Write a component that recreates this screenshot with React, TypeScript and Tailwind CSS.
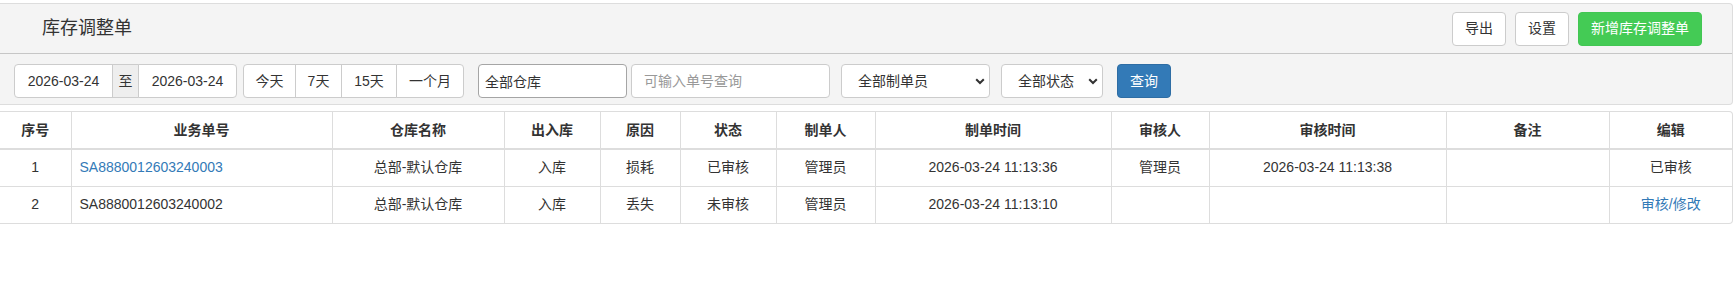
import type { FC, ReactNode } from 'react'

const font = { fontFamily: '"Liberation Sans", "Noto Sans CJK SC", sans-serif' }

const cols = [71, 261, 172, 96, 80, 96, 99, 236, 98, 237, 163, 123]
const heads = ['序号', '业务单号', '仓库名称', '出入库', '原因', '状态', '制单人', '制单时间', '审核人', '审核时间', '备注', '编辑']

type Row = {
  no: string
  warehouse: string
  dir: string
  reason: string
  status: string
  maker: string
  makeTime: string
  checker: string
  checkTime: string
  remark: string
  checked: boolean
}

const rows: Row[] = [
  {
    no: 'SA8880012603240003',
    warehouse: '总部-默认仓库',
    dir: '入库',
    reason: '损耗',
    status: '已审核',
    maker: '管理员',
    makeTime: '2026-03-24 11:13:36',
    checker: '管理员',
    checkTime: '2026-03-24 11:13:38',
    remark: '',
    checked: true,
  },
  {
    no: 'SA8880012603240002',
    warehouse: '总部-默认仓库',
    dir: '入库',
    reason: '丢失',
    status: '未审核',
    maker: '管理员',
    makeTime: '2026-03-24 11:13:10',
    checker: '',
    checkTime: '',
    remark: '',
    checked: false,
  },
]

const Btn: FC<{ children: ReactNode, green?: boolean }> = ({ children, green }) => (
  <button
    className={
      green
        ? 'h-[34px] px-[12px] rounded-[4px] border border-[#42c653] bg-[#44cb55] text-white text-[14px]'
        : 'h-[34px] px-[12px] rounded-[4px] border border-[#ccc] bg-white text-[#333] text-[14px]'
    }
  >
    {children}
  </button>
)

const Chevron = () => (
  <svg className="absolute right-[5px] top-[14px] pointer-events-none" width="10" height="7" viewBox="0 0 10 7">
    <path d="M1.2 1.2 5 5 8.8 1.2" fill="none" stroke="#333" strokeWidth="2" />
  </svg>
)

const Select: FC<{ label: string, w: string }> = ({ label, w }) => (
  <div className={`relative shrink-0 ${w} h-[34px]`}>
    <select className="appearance-none w-full h-full rounded-[4px] border border-[#ccc] bg-white pl-[16px] text-[14px] text-[#333] outline-none" style={font}>
      <option>{label}</option>
    </select>
    <Chevron />
  </div>
)

export default function App() {
  return (
    <div className="bg-white pt-[3px] text-[14px] text-[#333]" style={font}>
      <div className="w-[1733px] border border-l-0 border-[#ddd] rounded-r-[4px] bg-[#f4f4f4]">
        <div className="h-[50px] flex items-center border-b border-[#c6c6c6] pl-[42px] pr-[30px]">
          <div className="text-[18px] text-[#333] flex-1">库存调整单</div>
          <div className="flex gap-[9px]">
            <Btn>导出</Btn>
            <Btn>设置</Btn>
            <Btn green>新增库存调整单</Btn>
          </div>
        </div>
        <div className="h-[50px] flex pt-[10px] pl-[14px]">
          <div className="flex h-[34px] shrink-0">
            <input
              className="w-[99px] h-full border border-[#ccc] rounded-l-[4px] bg-white text-center text-[14px] text-[#333] outline-none"
              defaultValue="2026-03-24"
              style={font}
            />
            <span className="w-[27px] h-full -ml-px border border-[#ccc] bg-[#eee] flex items-center justify-center">至</span>
            <input
              className="w-[99px] h-full -ml-px border border-[#ccc] rounded-r-[4px] bg-white text-center text-[14px] text-[#333] outline-none"
              defaultValue="2026-03-24"
              style={font}
            />
          </div>
          <div className="flex h-[34px] ml-[6px] shrink-0">
            <button className="w-[53px] h-full border border-[#ccc] rounded-l-[4px] bg-white">今天</button>
            <button className="w-[47px] h-full -ml-px border border-[#ccc] bg-white">7天</button>
            <button className="w-[56px] h-full -ml-px border border-[#ccc] bg-white">15天</button>
            <button className="w-[68px] h-full -ml-px border border-[#ccc] rounded-r-[4px] bg-white">一个月</button>
          </div>
          <input
            className="ml-[14px] shrink-0 w-[149px] h-[34px] border border-[#a5a5a5] rounded-[4px] bg-white pl-[6px] text-[14px] text-[#333] outline-none"
            defaultValue="全部仓库"
            style={font}
          />
          <input
            className="ml-[4px] shrink-0 w-[199px] h-[34px] border border-[#ccc] rounded-[4px] bg-white pl-[12px] text-[14px] text-[#333] placeholder:text-[#999] outline-none"
            placeholder="可输入单号查询"
            style={font}
          />
          <div className="ml-[11px]">
            <Select label="全部制单员" w="w-[149px]" />
          </div>
          <div className="ml-[11px]">
            <Select label="全部状态" w="w-[102px]" />
          </div>
          <button className="ml-[14px] shrink-0 w-[54px] h-[34px] rounded-[4px] border border-[#2e6da4] bg-[#337ab7] text-white">查询</button>
        </div>
      </div>

      <div className="mt-[6px] w-[1733px] border border-l-0 border-[#ddd] rounded-r-[4px] bg-white">
        <table className="table-fixed border-collapse w-[1732px]">
          <colgroup>
            {cols.map((w, i) => (
              <col key={i} style={{ width: w }} />
            ))}
          </colgroup>
          <thead>
            <tr className="h-[37px] border-b-2 border-[#ddd]">
              {heads.map((h, i) => (
                <th key={h} className={`font-bold text-center ${i ? 'border-l border-[#ddd]' : ''}`}>
                  {h}
                </th>
              ))}
            </tr>
          </thead>
          <tbody>
            {rows.map((r, idx) => (
              <tr key={r.no} className={`h-[37px] ${idx ? 'border-t border-[#ddd]' : ''}`}>
                <td className="text-center">{idx + 1}</td>
                <td className="border-l border-[#ddd] pl-[8px]">
                  {r.checked ? <a className="text-[#337ab7]">{r.no}</a> : r.no}
                </td>
                <td className="border-l border-[#ddd] text-center">{r.warehouse}</td>
                <td className="border-l border-[#ddd] text-center">{r.dir}</td>
                <td className="border-l border-[#ddd] text-center">{r.reason}</td>
                <td className="border-l border-[#ddd] text-center">{r.status}</td>
                <td className="border-l border-[#ddd] text-center">{r.maker}</td>
                <td className="border-l border-[#ddd] text-center">{r.makeTime}</td>
                <td className="border-l border-[#ddd] text-center">{r.checker}</td>
                <td className="border-l border-[#ddd] text-center">{r.checkTime}</td>
                <td className="border-l border-[#ddd] text-center">{r.remark}</td>
                <td className="border-l border-[#ddd] text-center">
                  {r.checked ? '已审核' : <a className="text-[#337ab7]">审核/修改</a>}
                </td>
              </tr>
            ))}
          </tbody>
        </table>
      </div>
    </div>
  )
}
